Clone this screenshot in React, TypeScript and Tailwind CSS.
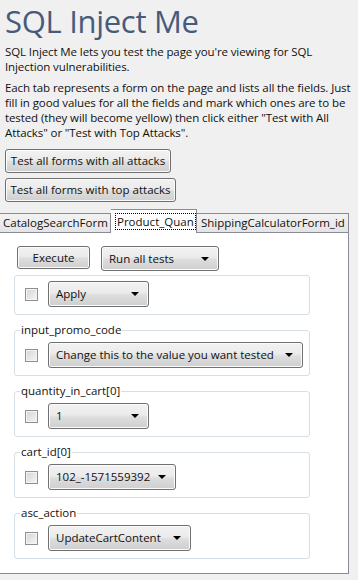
import React from 'react';

const btnBg =
  'bg-[linear-gradient(#f2f2f2,#ebebeb_45%,#dddddd_55%,#cfcfcf)] shadow-[inset_0_0_0_1px_#fbfbfb]';

function Button({ label, w, h }: { label: string; w: string; h: string }) {
  return (
    <div
      className={`flex items-center justify-center rounded-[3px] border border-[#707070] text-[11.5px] text-[#111] ${btnBg} ${w} ${h}`}
    >
      {label}
    </div>
  );
}

function Drop({ label, w, h = 'h-[26px]' }: { label: string; w: string; h?: string }) {
  return (
    <div
      className={`flex items-center justify-between rounded-[3px] border border-[#707070] pl-[7px] pr-[9px] text-[11.5px] text-[#111] ${btnBg} ${w} ${h}`}
    >
      <span className="whitespace-nowrap">{label}</span>
      <span className="h-0 w-0 border-x-[4px] border-t-[4px] border-x-transparent border-t-black" />
    </div>
  );
}

function Check() {
  return (
    <div className="h-[13px] w-[13px] shrink-0 border border-[#8e8f8f] bg-[linear-gradient(135deg,#d4d4d4,#f6f6f6)] shadow-[inset_0_0_0_1px_#f4f4f4]" />
  );
}

function Group({ name, value, w }: { name?: string; value: string; w: string }) {
  return (
    <fieldset className="w-[296px] rounded-[3px] border border-[#d5dfe5] p-0">
      {name && (
        <legend className="ml-[5px] px-[1px] text-[11.5px] leading-[14px] text-[#111]">{name}</legend>
      )}
      <div className="flex items-center gap-[10px] pb-[7px] pl-[10px] pt-[5px]">
        <Check />
        <Drop label={value} w={w} />
      </div>
    </fieldset>
  );
}

export default function App() {
  const tabs = ['CatalogSearchForm', 'Product_Quan', 'ShippingCalculatorForm_id'];

  return (
    <div className="h-[580px] w-[358px] overflow-hidden bg-[#f0f0f0] font-['Open_Sans',sans-serif] text-[#111]">
      <div className="px-[5px]">
        <h1 className="pt-[1px] text-[31px] font-normal leading-[40px] tracking-[-0.3px] text-[#475a7c]">
          SQL Inject Me
        </h1>
        <p className="mt-[3px] whitespace-nowrap text-[11.5px] leading-[15px] tracking-[-0.1px]">
          SQL Inject Me lets you test the page you're viewing for SQL
          <br />
          Injection vulnerabilities.
        </p>
        <p className="mt-[6px] whitespace-nowrap text-[11.5px] leading-[15px] tracking-[-0.1px]">
          Each tab represents a form on the page and lists all the fields. Just
          <br />
          fill in good values for all the fields and mark which ones are to be
          <br />
          tested (they will become yellow) then click either "Test with All
          <br />
          Attacks" or "Test with Top Attacks".
        </p>
        <div className="mt-[9px] flex flex-col gap-[5px]">
          <Button label="Test all forms with all attacks" w="w-[166px]" h="h-[24px]" />
          <Button label="Test all forms with top attacks" w="w-[171px]" h="h-[24px]" />
        </div>
      </div>

      <div className="mt-[7px] w-[349px]">
        <div className="relative z-10 flex h-[23px] items-end text-[11.5px]">
          <div className="flex h-[19px] w-[111px] items-center border border-b-0 border-l-0 border-[#898c95] bg-[linear-gradient(#f3f3f3,#e4e4e4)] pl-[3px] leading-none">
            {tabs[0]}
          </div>
          <div className="-mb-px flex h-[24px] w-[86px] items-center overflow-hidden border border-b-0 border-l-0 border-[#898c95] bg-white pl-[4px]">
            <span className="whitespace-nowrap border border-dotted border-black px-[1px] leading-[15px]">
              {tabs[1]}
            </span>
          </div>
          <div className="flex h-[19px] flex-1 items-center border border-b-0 border-l-0 border-[#898c95] bg-[linear-gradient(#f3f3f3,#e4e4e4)] pl-[4px] leading-none">
            {tabs[2]}
          </div>
        </div>
        <div className="h-[342px] border-r border-b border-t border-[#898c95] bg-white pl-[14px] pt-[13px]">
          <div className="flex items-start gap-[11px] pl-[3px]">
            <Button label="Execute" w="w-[73px]" h="h-[23px]" />
            <Drop label="Run all tests" w="w-[118px]" h="h-[25px]" />
          </div>
          <div className="mt-[4px] flex flex-col gap-[8px]">
            <Group value="Apply" w="w-[101px]" />
            <Group name="input_promo_code" value="Change this to the value you want tested" w="w-[255px]" />
            <Group name="quantity_in_cart[0]" value="1" w="w-[101px]" />
            <Group name="cart_id[0]" value="102_-1571559392" w="w-[128px]" />
            <Group name="asc_action" value="UpdateCartContent" w="w-[143px]" />
          </div>
        </div>
      </div>
    </div>
  );
}
